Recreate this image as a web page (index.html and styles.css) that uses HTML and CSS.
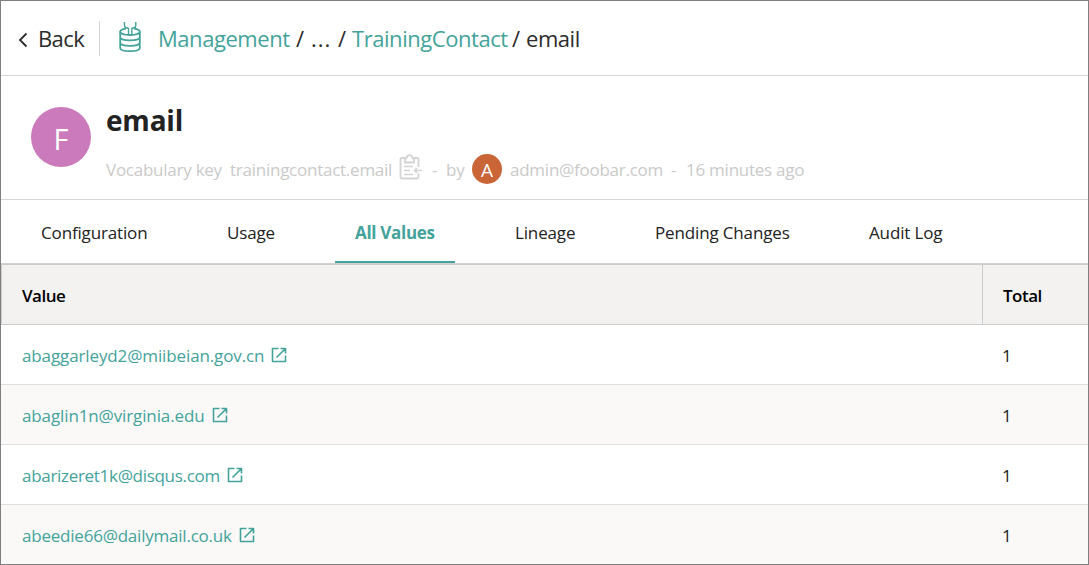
FILE: index.html
```html
<!DOCTYPE html>
<html lang="en">
<head>
<meta charset="utf-8">
<title>email</title>
<link rel="stylesheet" href="styles.css">
</head>
<body>
<svg class="defs" aria-hidden="true">
  <symbol id="open" viewBox="0 0 16 16"><path d="M7.500 1.500H1.500V14.500H14.500V8.500M9.500 1.500H14.500V6.500M14.500 1.500L5.500 10.500" fill="none" stroke="currentColor" stroke-width="1.600" stroke-linejoin="round"/></symbol>
</svg>
<div class="page">
  <header class="topbar">
    <a class="back"><svg class="chevron" viewBox="0 0 10 16"><path d="M8.500 1.500L2 8L8.500 14.500" fill="none" stroke="currentColor" stroke-width="1.800"/></svg><span>Back</span></a>
    <svg class="db-icon" viewBox="0 0 24 32">
      <g fill="none" stroke="currentColor" stroke-width="1.800">
        <path d="M6.500 1V4.500Q6.500 6.500 8.500 6.800L10.500 7.500V13.500M17.800 1V4.500Q17.800 6.500 15.800 6.800L13.800 7.500V13.500" stroke-width="1.400"/>
        <path d="M8 7.700C4.500 8.200 2.200 9.200 2.200 10.800C2.200 12.700 6.500 14 12 14S21.800 12.700 21.800 10.800C21.800 9.200 19.500 8.200 16 7.700"/>
        <path d="M2.200 10.500V27C2.200 29 6.500 30.200 12 30.200S21.800 29 21.800 27V10.500M2.200 16C2.200 18 6.500 19.300 12 19.300S21.800 18 21.800 16M2.200 21.500C2.200 23.500 6.500 24.800 12 24.800S21.800 23.500 21.800 21.500"/>
      </g>
    </svg>
    <nav class="crumbs">
      <a class="c-root">Management</a><span class="c-sep1">/</span><span class="c-dots">...</span><span class="c-sep2">/</span><a class="c-parent">TrainingContact</a><span class="c-sep3">/</span><span>email</span>
    </nav>
  </header>
  <section class="summary">
    <div class="avatar">F</div>
    <div class="info">
      <h1>email</h1>
      <div class="meta">
        <span class="m-type">Vocabulary key</span>
        <span class="m-key">trainingcontact.email</span>
        <svg class="clip" viewBox="0 0 24 26">
          <g fill="none" stroke="currentColor" stroke-width="1.800">
            <path d="M6 4H3Q1.500 4 1.500 5.500V23Q1.500 24.500 3 24.500H18Q19.500 24.500 19.500 23V19.500M15 4H18Q19.500 4 19.500 5.500V13"/>
            <path d="M6 8.500V5.500Q6 4 7.500 4Q8 1.200 10.500 1.200T13.500 4Q15 4 15 5.500V8.500Z"/>
            <path d="M5 12.500H14M5 16.500H11M5 20.500H14M23 16.500H15.500M18 14L15.500 16.500L18 19" stroke-width="1.600"/>
          </g>
        </svg>
        <span class="m-dash">-</span>
        <span class="m-by">by</span>
        <span class="avatar-sm">A</span>
        <span class="m-user">admin@foobar.com</span>
        <span class="m-dash2">-</span>
        <span class="m-time">16 minutes ago</span>
      </div>
    </div>
  </section>
  <nav class="tabs">
    <a class="t-config">Configuration</a>
    <a class="t-usage">Usage</a>
    <a class="t-values active">All Values</a>
    <a class="t-lineage">Lineage</a>
    <a class="t-pending">Pending Changes</a>
    <a class="t-audit">Audit Log</a>
  </nav>
  <div class="table">
    <div class="row head"><div class="value">Value</div><div class="total">Total</div></div>
    <div class="row"><div class="value"><a>abaggarleyd2@miibeian.gov.cn</a><svg><use href="#open"/></svg></div><div class="total">1</div></div>
    <div class="row alt"><div class="value"><a>abaglin1n@virginia.edu</a><svg><use href="#open"/></svg></div><div class="total">1</div></div>
    <div class="row"><div class="value"><a class="tight">abarizeret1k@disqus.com</a><svg><use href="#open"/></svg></div><div class="total">1</div></div>
    <div class="row alt"><div class="value"><a class="snug">abeedie66@dailymail.co.uk</a><svg><use href="#open"/></svg></div><div class="total">1</div></div>
  </div>
</div>
</body>
</html>
```

FILE: styles.css
```css
* { box-sizing: border-box; }
body { margin: 0; background: #fff; color: #222; font-family: "Open Sans", "Noto Sans", sans-serif; font-size: 17px; line-height: 24px; }
.defs { position: absolute; width: 0; height: 0; }
.page { width: 1089px; height: 565px; border: 1px solid #7f7f7f; overflow: hidden; }
.page span, .page a { white-space: nowrap; }

.topbar { display: flex; align-items: center; height: 75px; padding: 0 0 0 17px; border-bottom: 1px solid #d6d6d6; font-size: 22px; letter-spacing: -0.45px; color: #2b2b2b; }
.back { display: flex; align-items: center; width: 82px; height: 35px; border-right: 1px solid #d4d4d4; }
.back span { margin-left: 10px; letter-spacing: -0.6px; }
.chevron { width: 10px; height: 16px; margin-top: 3px; }
.db-icon { width: 24px; height: 32px; margin: -3px 16px 0 18px; color: #43a39b; }
.crumbs { display: flex; }
.crumbs a { color: #43a39b; }
.c-root { width: 138px; }
.c-sep1 { width: 15px; }
.c-dots { width: 27px; letter-spacing: 1px; }
.c-sep2 { width: 14px; }
.c-parent { width: 160px; }
.c-sep3 { width: 14px; }

.summary { display: flex; height: 124px; padding: 31px 0 0 30px; border-bottom: 1px solid #d6d6d6; }
.avatar { width: 60px; height: 60px; border-radius: 50%; background: #cb7bbb; color: #fff; font-size: 29px; line-height: 63px; text-align: center; }
.info { margin: -5px 0 0 15px; }
h1 { margin: 0; font-size: 28px; line-height: 36px; letter-spacing: -0.2px; color: #222; }
.meta { display: flex; align-items: center; height: 30px; margin-top: 16px; color: #cacaca; letter-spacing: -0.25px; }
.meta > span:not(.avatar-sm) { padding-top: 1px; }
.m-type { width: 124px; }
.m-key { width: 169px; }
.clip { width: 24px; height: 26px; margin-top: -4px; color: #d3d3d3; }
.m-dash { width: 14px; margin-left: 9px; }
.m-by { width: 26px; }
.avatar-sm { width: 30px; height: 30px; border-radius: 50%; background: #c96536; color: #fff; font-size: 19px; line-height: 32px; text-align: center; }
.m-user { width: 161px; margin-left: 8px; }
.m-dash2 { width: 15px; }

.tabs { display: flex; height: 64px; padding-left: 20px; border-bottom: 1px solid #d2d2d2; line-height: 66px; letter-spacing: -0.15px; }
.tabs a { height: 63px; padding: 0 20px; }
.t-config { width: 146px; margin-right: 40px; }
.t-usage { width: 88px; margin-right: 40px; }
.t-values { width: 120px; margin-right: 40px; }
.t-lineage { width: 100px; margin-right: 40px; }
.t-pending { width: 174px; margin-right: 40px; }
.tabs .active { color: #43a39b; font-weight: 700; border-bottom: 2px solid #43a39b; letter-spacing: -0.3px; }

.row { display: flex; height: 60px; border-bottom: 1px solid #dedede; line-height: 61px; letter-spacing: -0.12px; }
.row.alt { background: #faf9f8; }
.row.head { height: 61px; background: #f3f2f1; border: 1px solid #cccccc; border-right: 0; color: #000; font-weight: 600; letter-spacing: -0.5px; }
.value { display: flex; align-items: flex-start; width: 981px; padding-left: 21px; }
.head .value { padding-left: 20px; border-right: 1px solid #cccccc; }
.value a { color: #43a39b; }
.value .tight { letter-spacing: -0.3px; }
.value .snug { letter-spacing: -0.22px; }
.value svg { width: 16px; height: 16px; margin: 22px 0 0 7px; color: #43a39b; }
.total { padding-left: 20px; }
```
